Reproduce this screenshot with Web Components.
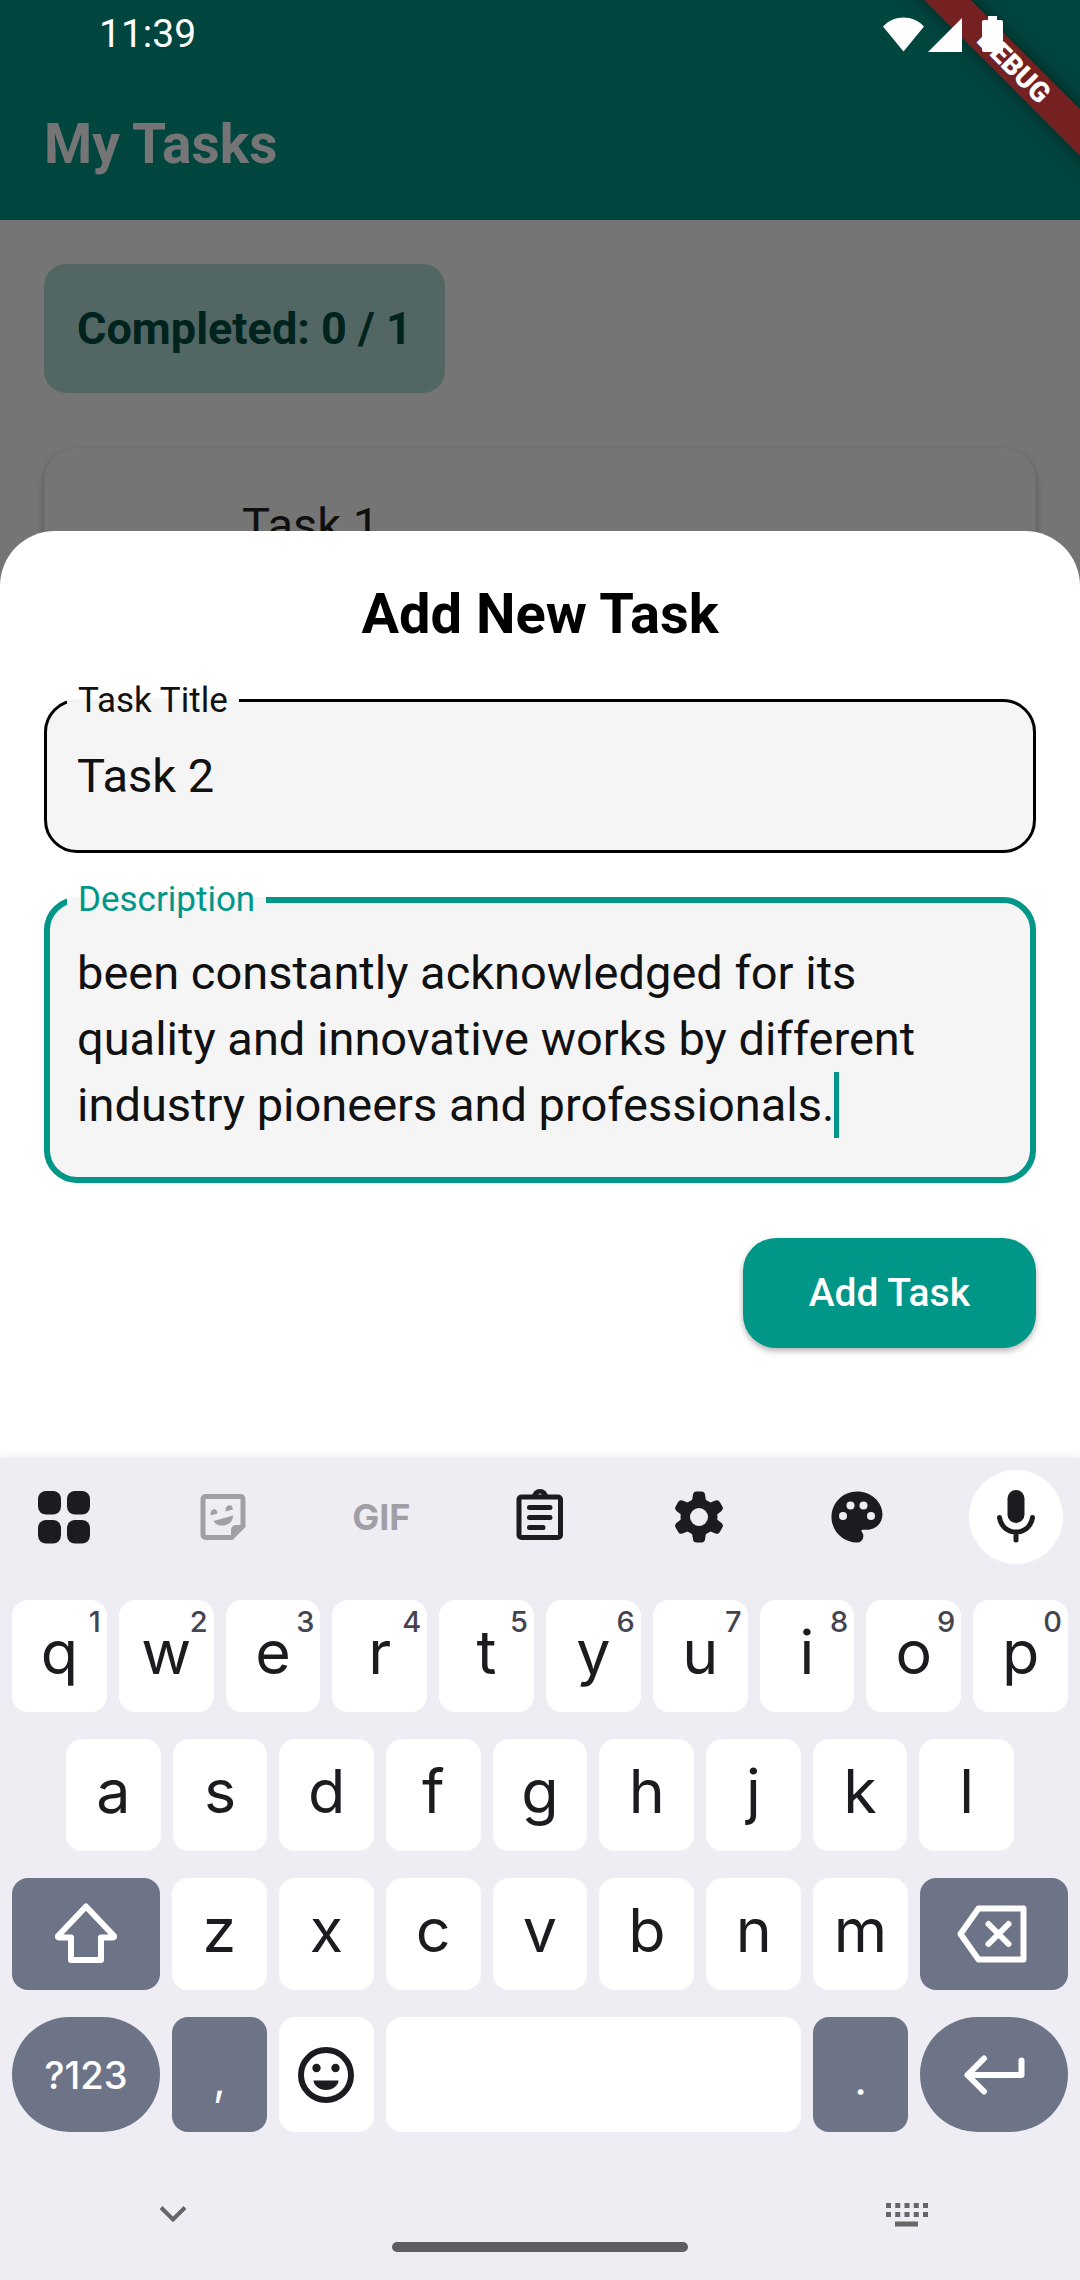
<!DOCTYPE html>
<html lang="en">
<head>
<meta charset="utf-8">
<meta name="viewport" content="width=device-width, initial-scale=1">
<title>My Tasks</title>
<style>
  body { margin: 0; font-family: Roboto, "Liberation Sans", sans-serif; background: #fff; }
</style>
</head>
<body>
<task-app>
  <app-bar slot="screen">My Tasks</app-bar>
  <completed-badge slot="screen">Completed: 0 / 1</completed-badge>
  <task-card slot="screen">Task 1</task-card>
  <task-sheet slot="bottom" heading="Add New Task">
    <text-field label="Task Title" value="Task 2"></text-field>
    <text-field label="Description" focused rows="3" value="been constantly acknowledged for its&#10;quality and innovative works by different&#10;industry pioneers and professionals."></text-field>
    <filled-button>Add Task</filled-button>
  </task-sheet>
  <soft-keyboard slot="bottom"></soft-keyboard>
  <debug-banner slot="top">DEBUG</debug-banner>
  <status-bar slot="top" time="11:39"></status-bar>
</task-app>

<script>
const define = (name, render, setup) => customElements.define(name, class extends HTMLElement {
  connectedCallback() {
    if (this.shadowRoot) return;
    const root = this.attachShadow({ mode: 'open' });
    root.innerHTML = '<style>:host,*{box-sizing:border-box}</style>' + render(this);
    if (setup) setup(this, root);
  }
});

/* Layers: the screen, the scrim, the bottom sheet with the keyboard, the system overlays */
define('task-app', () => `
  <style>
    :host { display: grid; grid-template: minmax(100vh, auto) / minmax(0, 1fr); overflow: hidden; }
    .screen, .scrim, .bottom, .top { grid-area: 1 / 1; }
    .screen { display: flex; flex-direction: column; align-items: flex-start; background: #fff; }
    .scrim { background: rgba(0, 0, 0, .54); }
    .bottom { display: flex; flex-direction: column; justify-content: flex-end; min-width: 0; }
    .top { position: relative; pointer-events: none; }
  </style>
  <div class="screen"><slot name="screen"></slot></div>
  <div class="scrim"></div>
  <div class="bottom"><slot name="bottom"></slot></div>
  <div class="top"><slot name="top"></slot></div>`);

define('status-bar', el => `
  <style>
    :host { display: flex; position: relative; align-items: center; height: 68px; padding: 0 76px 0 99px; color: #fff; font-size: 39px; }
    span { flex: 1; }
    svg { display: block; fill: currentColor; }
  </style>
  <span>${el.getAttribute('time')}</span>
  <svg width="122" height="36" viewBox="0 0 122 36" role="img" aria-label="Wi-Fi, signal, battery">
    <path d="M1 10.500C12-1.500 31-1.500 42 10.500L21.500 35.500Z"/>
    <path d="M46 36H80V2Z"/>
    <path d="M106 0h9v4h4a2 2 0 0 1 2 2v28a2 2 0 0 1-2 2h-17a2 2 0 0 1-2-2V6a2 2 0 0 1 2-2h4Z"/>
  </svg>`);

define('debug-banner', () => `
  <style>
    :host { display: block; position: absolute; top: 0; right: 0; width: 220px; height: 220px; overflow: hidden; }
    div { position: absolute; top: 50px; right: -84px; width: 300px; height: 33px; transform: rotate(45deg);
      background: #752121; box-shadow: 0 0 17px rgba(0, 0, 0, .5); color: #fff; font-size: 28px; line-height: 33px;
      font-weight: 900; text-align: center; }
  </style>
  <div><slot></slot></div>`);

define('app-bar', () => `
  <style>
    :host { display: flex; align-items: center; align-self: stretch; height: 220px; padding: 68px 44px 0; background: #009688; color: #fff; }
    h1 { margin: 0; font-size: 55px; line-height: 66px; font-weight: 700; }
  </style>
  <h1><slot></slot></h1>`);

define('completed-badge', () => `
  <style>
    :host { display: block; margin: 44px 44px 55px; padding: 33px; border-radius: 22px; background: #b2dfdb; color: #004d40;
      font-size: 45px; line-height: 63px; font-weight: 700; }
  </style>
  <slot></slot>`);

define('task-card', () => `
  <style>
    :host { display: block; align-self: stretch; margin: 0 44px; padding: 44px 44px 44px 198px; border-radius: 33px; background: #fff;
      box-shadow: 0 3px 6px rgba(0, 0, 0, .3); color: #222; font-size: 47px; line-height: 66px; }
  </style>
  <slot></slot>`);

define('task-sheet', el => `
  <style>
    :host { display: flex; flex-direction: column; gap: 27px; padding: 44px 44px 110px; background: #fff; border-radius: 55px 55px 0 0; }
    h2 { margin: 0; color: #000; font-size: 56px; line-height: 79px; font-weight: 700; text-align: center; }
  </style>
  <h2>${el.getAttribute('heading')}</h2>
  <slot></slot>`);

/* Outlined field: the legend cuts the notch in the border */
define('text-field', el => {
  const value = el.getAttribute('value'), rows = el.getAttribute('rows');
  return `
  <style>
    :host { display: block; }
    fieldset { margin: 0; min-width: 0; padding: 23px 30px 41px; border: 3px solid #000; border-radius: 33px; background: #f5f5f5; }
    legend { margin-left: -10px; padding: 0 11px; font-size: 35px; line-height: 39px; }
    label { color: #111; }
    .box { position: relative; }
    input, textarea { display: block; width: 100%; height: 66px; margin: 0; padding: 0; border: 0; outline: 0; background: none; resize: none;
      color: #111; font: 47px/66px Roboto, "Liberation Sans", sans-serif; overflow: hidden; }
    textarea { height: 198px; white-space: pre; }
    i { position: absolute; bottom: 0; width: 5px; height: 66px; background: #009688; }
    :host([focused]) fieldset { padding: 21px 27px 39px; border: 6px solid #009688; }
    :host([focused]) label { color: #009688; }
  </style>
  <fieldset>
    <legend><label for="field">${el.getAttribute('label')}</label></legend>
    <div class="box">${rows ? `<textarea id="field" rows="${rows}">${value}</textarea><i></i>` : `<input id="field" type="text" value="${value}">`}</div>
  </fieldset>`;
}, (el, root) => {
  /* The caret stands at the end of the last line */
  const caret = root.querySelector('i');
  if (!caret) return;
  const area = root.querySelector('textarea');
  const place = () => {
    const pen = document.createElement('canvas').getContext('2d');
    pen.font = '47px Roboto, "Liberation Sans", sans-serif';
    caret.style.left = Math.round(pen.measureText(area.value.split('\n').pop()).width) + 'px';
  };
  area.addEventListener('input', place);
  place();
});

define('filled-button', () => `
  <style>
    :host { display: block; align-self: flex-end; margin-top: 28px; }
    button { display: block; height: 110px; padding: 0 66px; border: 0; border-radius: 33px; background: #009688; color: #fff;
      font: 500 39px/55px Roboto, "Liberation Sans", sans-serif; box-shadow: 0 3px 6px rgba(0, 0, 0, .3); }
  </style>
  <button type="button"><slot></slot></button>`);

const icons = {
  grid: `<rect x="7" y="7" width="23" height="23.500" rx="8"/><rect x="36" y="7" width="23" height="23.500" rx="8"/><rect x="7" y="36" width="23" height="23.500" rx="8"/><rect x="36" y="36" width="23" height="23.500" rx="8"/>`,
  sticker: `<path fill="none" stroke="currentColor" stroke-width="5" d="M15.500 12.500H50.500a2.500 2.500 0 0 1 2.500 2.500V42L41.500 53.500H15.500a2.500 2.500 0 0 1-2.500-2.500V15a2.500 2.500 0 0 1 2.500-2.500Z"/><path d="M41 54V46a5 5 0 0 1 5-5H54Z"/><path d="M20.500 31.500C20 24 27 23 27.500 29.500Z"/><path d="M35.500 27.500C35 20 42.500 19 43 25.500Z"/><path d="M23.500 37L43 31.500C43 38 38 41.500 32 41.500C28 41.500 25 40 23.500 37Z"/>`,
  clipboard: `<path fill="none" stroke="currentColor" stroke-width="5" d="M14.500 13H51a2.500 2.500 0 0 1 2.500 2.500V51a2.500 2.500 0 0 1-2.500 2.500H14.500a2.500 2.500 0 0 1-2.500-2.500V15.500a2.500 2.500 0 0 1 2.500-2.500Z"/><path fill-rule="evenodd" d="M25 13a8 8 0 0 1 16 0Z M31 11.500a2 2 0 0 1 4 0a2 2 0 0 1-4 0Z"/><path fill="none" stroke="currentColor" stroke-width="5" stroke-linecap="round" d="M22.500 23.500H43M22.500 33.500H43M22.500 43.500H36"/>`,
  gear: `<circle cx="33" cy="33" r="18.500"/><g id="t"><path d="M25.500 20L27 10.500Q27.500 7.500 30.500 7.500H35.500Q38.500 7.500 39 10.500L40.500 20V46L39 55.500Q38.500 58.500 35.500 58.500H30.500Q27.500 58.500 27 55.500L25.500 46Z"/></g><use href="#t" transform="rotate(60 33 33)"/><use href="#t" transform="rotate(120 33 33)"/><circle cx="33" cy="33" r="9" fill="#eeedf3"/>`,
  palette: `<path transform="translate(2.400 2.400) scale(2.550)" d="M12 22C6.490 22 2 17.510 2 12S6.490 2 12 2s10 4.040 10 9c0 3.310-2.690 6-6 6h-1.770c-.280 0-.500.220-.500.500 0 .120.050.230.130.330.410.470.640 1.060.640 1.670A2.500 2.500 0 0 1 12 22z"/><g fill="#eeedf3"><circle cx="19" cy="32" r="4"/><circle cx="26.500" cy="21.500" r="4"/><circle cx="39.500" cy="21.500" r="4"/><circle cx="47" cy="32" r="4"/></g>`,
  mic: `<rect x="24.500" y="6" width="17" height="33" rx="8.500"/><path fill="none" stroke="currentColor" stroke-width="5" stroke-linecap="round" d="M16.500 33.500C18 43 25 48 33 48S48 43 49.500 33.500M33 48V56"/>`,
  shift: `<path fill="none" stroke="currentColor" stroke-width="6" stroke-linejoin="round" d="M33 5.500L5 35Q4.500 36.500 6 36.500H18V59H48V36.500H60Q61.500 36.500 61 35Z"/>`,
  back: `<path fill="none" stroke="currentColor" stroke-width="6" stroke-linejoin="round" d="M21.500 7.500H66.500V58.500H21.500L3.500 33Z"/><path fill="none" stroke="currentColor" stroke-width="6" stroke-linecap="round" d="M31.500 23L51.500 43M51.500 23L31.500 43"/>`,
  enter: `<path fill="none" stroke="currentColor" stroke-width="6" stroke-linecap="round" stroke-linejoin="round" d="M23 16.500L6.500 33L23 49.500M6.500 33H60.500V18.500"/>`,
  emoji: `<circle cx="33" cy="33" r="25" fill="none" stroke="currentColor" stroke-width="6"/><circle cx="23.500" cy="26" r="4.200"/><circle cx="42.500" cy="26" r="4.200"/><path d="M20.500 38.500H45.500C45.500 43 40 48 33 48S20.500 43 20.500 38.500Z"/>`,
  down: `<path fill="none" stroke="currentColor" stroke-width="4" d="M21 26.500L33 38.500L45 26.500"/>`,
  keys: `<path fill="none" stroke="currentColor" stroke-width="5" stroke-dasharray="5 4.250" d="M12 24.500H54M12 33.500H54"/><path d="M21 40.500H44V45.500H21Z"/>`
};
const icon = (name, width = 66) => `<svg width="${width}" height="66" viewBox="0 0 ${width} 66" fill="currentColor" aria-hidden="true">${icons[name]}</svg>`;

define('key-cap', el => {
  const glyph = el.getAttribute('icon'), hint = el.getAttribute('hint');
  return `
  <style>
    :host { display: block; flex: 1 1 0; min-width: 0; }
    :host([wide]) { flex: none; width: 148px; }
    :host([space]) { flex: 4 1 36px; }
    button { display: flex; position: relative; align-items: center; justify-content: center; width: 100%; height: 100%; margin: 0; padding: 0 0 8px; border: 0;
      border-radius: 16px; background: #fff; color: #1b1b20; font: 61px/72px Inter, Roboto, sans-serif; }
    small { position: absolute; top: 4px; right: 6px; color: #43444f; font-size: 29px; line-height: 36px; font-weight: 500; }
    svg { display: block; flex: none; }
    :host([dark]) button { background: #6e7487; color: #fff; }
    :host([icon]) button { padding: 0; }
    :host([round]) button { border-radius: 58px; }
    :host([mode]) button { padding: 0; font-size: 38px; font-weight: 500; }
    :host([mark]) button { padding: 8px 0 0; font-size: 44px; }
  </style>
  <button type="button" ${el.title ? `aria-label="${el.title}"` : ''}>${glyph ? icon(glyph, glyph === 'back' ? 74 : 66) : ''}<slot></slot>${hint ? `<small>${hint}</small>` : ''}</button>`;
});

define('tool-button', el => `
  <style>
    :host { display: block; }
    button { display: flex; align-items: center; justify-content: center; width: 94px; height: 94px; margin: 0; padding: 0; border: 0; border-radius: 47px;
      background: none; color: #1b1b20; font: 700 36px/42px Inter, Roboto, sans-serif; }
    :host([muted]) button { color: #a09fa6; }
    :host([filled]) button { background: #fff; }
    svg { display: block; flex: none; }
  </style>
  <button type="button" aria-label="${el.getAttribute('name')}">${el.hasAttribute('icon') ? icon(el.getAttribute('icon')) : ''}<slot></slot></button>`);

const letters = (row, hints = '') => [...row].map((c, i) => `<key-cap${hints ? ` hint="${hints[i]}"` : ''}>${c}</key-cap>`).join('');

define('soft-keyboard', () => `
  <style>
    :host { display: block; background: #eeedf3; box-shadow: 0 0 10px rgba(0, 0, 0, .1); }
    .tools { display: flex; justify-content: space-between; padding: 12px 17px 36px; }
    .keys { display: flex; flex-direction: column; gap: 27px; padding: 0 12px; }
    .row { display: flex; gap: 12px; height: 112px; }
    .inset { padding: 0 54px; }
    .last { height: 115px; }
  </style>
  <div class="tools">
    <tool-button name="Menu" icon="grid"></tool-button>
    <tool-button name="Stickers" icon="sticker" muted></tool-button>
    <tool-button name="GIF" muted>GIF</tool-button>
    <tool-button name="Clipboard" icon="clipboard"></tool-button>
    <tool-button name="Settings" icon="gear"></tool-button>
    <tool-button name="Theme" icon="palette"></tool-button>
    <tool-button name="Voice input" icon="mic" filled></tool-button>
  </div>
  <div class="keys">
    <div class="row">${letters('qwertyuiop', '1234567890')}</div>
    <div class="row inset">${letters('asdfghjkl')}</div>
    <div class="row"><key-cap wide dark icon="shift" title="Shift"></key-cap>${letters('zxcvbnm')}<key-cap wide dark icon="back" title="Delete"></key-cap></div>
    <div class="row last"><key-cap wide dark round mode>?123</key-cap><key-cap dark mark>,</key-cap><key-cap icon="emoji" title="Emoji"></key-cap><key-cap space title="Space"></key-cap><key-cap dark mark>.</key-cap><key-cap wide dark round icon="enter" title="Enter"></key-cap></div>
  </div>
  <nav-strip></nav-strip>`);

define('nav-strip', () => `
  <style>
    :host { display: flex; align-items: flex-start; justify-content: space-between; height: 148px; padding: 49px 140px 0; }
    button { display: block; margin: 0; padding: 0; border: 0; background: none; color: #666; }
    svg { display: block; }
    span { width: 296px; height: 10px; margin-top: 61px; border-radius: 5px; background: #5e5e60; }
  </style>
  <button type="button" aria-label="Hide keyboard">${icon('down')}</button>
  <span></span>
  <button type="button" aria-label="Switch keyboard">${icon('keys')}</button>`);
</script>
</body>
</html>
